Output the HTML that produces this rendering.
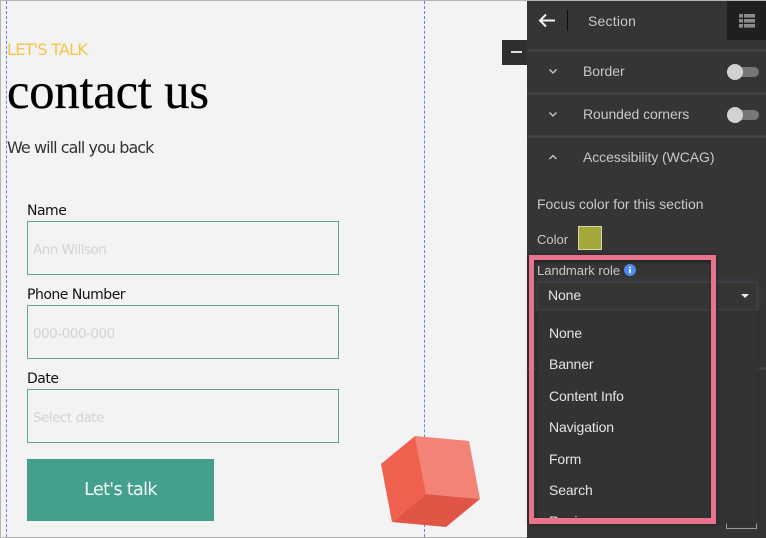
<!DOCTYPE html>
<html><head><meta charset="utf-8">
<style>
html,body{margin:0;padding:0}
body{width:766px;height:538px;position:relative;overflow:hidden;background:#f3f3f3;font-family:"Liberation Sans",sans-serif}
.a{position:absolute;white-space:nowrap}
.os{font-family:"DejaVu Sans",sans-serif}
.lab{left:27px;font-size:14px;color:#111;line-height:18px;letter-spacing:-.5px}
.inp{left:27px;width:310px;height:52px;border:1px solid #5fa98f}
.ph{left:33px;font-size:13.5px;color:#d3d3d3;line-height:18px;letter-spacing:-.5px}
.p{color:#c8c8c8;font-size:14px;letter-spacing:-.08px;line-height:16px}
.sep{left:527px;width:239px;height:3px;background:#414141}
.opt{left:549px;font-size:14px;color:#e4e4e4;line-height:16px;letter-spacing:-.12px}
.tt{width:32px;height:10px;border-radius:5px;background:#777;left:727px}
.tk{width:16px;height:16px;border-radius:50%;background:#d2d2d2;left:727px}
</style></head><body>
<div class="a" style="left:0;top:0;width:766px;height:1px;background:#b5b5b5"></div>
<div class="a" style="left:0;top:0;width:1px;height:538px;background:#b5b5b5"></div>
<div class="a" style="left:0;top:537px;width:766px;height:1px;background:#b5b5b5"></div>
<div class="a" style="left:6px;top:1px;height:536px;border-left:1px dashed #5f85cf"></div>
<div class="a" style="left:424px;top:1px;height:536px;border-left:1px dashed #5f85cf"></div>

<div class="a os" style="left:7px;top:41px;font-size:16px;line-height:18px;color:#f6c445;letter-spacing:-.72px">LET'S TALK</div>
<div class="a" style="left:7px;top:64px;font-family:'Liberation Serif',serif;font-size:50.5px;line-height:54px;color:#000;letter-spacing:-.15px;-webkit-text-stroke:.3px #000">contact us</div>
<div class="a os" style="left:7px;top:138px;font-size:16px;line-height:20px;color:#333;letter-spacing:-.95px">We will call you back</div>

<div class="a os lab" style="top:202px">Name</div>
<div class="a inp" style="top:221px"></div>
<div class="a os ph" style="top:241px">Ann Willson</div>
<div class="a os lab" style="top:286px">Phone Number</div>
<div class="a inp" style="top:305px"></div>
<div class="a os ph" style="top:325px">000-000-000</div>
<div class="a os lab" style="top:370px">Date</div>
<div class="a inp" style="top:389px"></div>
<div class="a os ph" style="top:409px">Select date</div>
<div class="a os" style="left:27px;top:459px;width:187px;height:62px;background:#449f8e;color:#f2fbf8;font-size:17.5px;line-height:62px;text-align:center;letter-spacing:-.65px">Let's talk</div>

<svg class="a" style="left:375px;top:430px" width="110" height="100" viewBox="375 430 110 100">
<polygon points="415,436 469,441 480,499 426,494" fill="#f38376"/>
<polygon points="415,436 381,464 392,522 426,494" fill="#f0604f"/>
<polygon points="426,494 480,499 446,527 392,522" fill="#e05545"/>
</svg>

<div class="a" style="left:527px;top:0;width:239px;height:538px;background:#353535"></div>
<div class="a" style="left:527px;top:0;width:239px;height:1px;background:#b5b5b5"></div>
<div class="a" style="left:502px;top:40px;width:25px;height:25px;background:#2f2f2f"></div>
<div class="a" style="left:511px;top:51px;width:11px;height:2px;background:#ddd"></div>

<svg class="a" style="left:538px;top:13px" width="18" height="15" viewBox="0 0 18 15"><path d="M17 7.5H2M8 1.5L2 7.5L8 13.5" fill="none" stroke="#f2f2f2" stroke-width="2"/></svg>
<div class="a" style="left:567px;top:10px;width:1px;height:21px;background:#0e0e0e"></div>
<div class="a p" style="left:588px;top:13px;letter-spacing:.2px">Section</div>
<div class="a" style="left:727px;top:1px;width:39px;height:39px;background:#1f1f1f"></div>
<svg class="a" style="left:739px;top:14px" width="16" height="14" viewBox="0 0 16 14"><g fill="#8a8a8a"><rect x="0" y="0" width="4" height="3.6"/><rect x="5" y="0" width="11" height="3.6"/><rect x="0" y="5" width="4" height="3.6"/><rect x="5" y="5" width="11" height="3.6"/><rect x="0" y="10" width="4" height="3.6"/><rect x="5" y="10" width="11" height="3.6"/></g></svg>

<div class="a sep" style="top:49px"></div>
<div class="a sep" style="top:92px"></div>
<div class="a sep" style="top:135px"></div>

<svg class="a" style="left:548px;top:68px" width="10" height="7" viewBox="0 0 10 7"><path d="M1.5 1.5L5 5L8.5 1.5" fill="none" stroke="#ccc" stroke-width="1.3"/></svg>
<svg class="a" style="left:548px;top:111px" width="10" height="7" viewBox="0 0 10 7"><path d="M1.5 1.5L5 5L8.5 1.5" fill="none" stroke="#ccc" stroke-width="1.3"/></svg>
<svg class="a" style="left:548px;top:154px" width="10" height="7" viewBox="0 0 10 7"><path d="M1.5 5L5 1.5L8.5 5" fill="none" stroke="#ccc" stroke-width="1.3"/></svg>

<div class="a p" style="left:583px;top:63px">Border</div>
<div class="a p" style="left:583px;top:106px">Rounded corners</div>
<div class="a p" style="left:583px;top:149px">Accessibility (WCAG)</div>
<div class="a tt" style="top:67px"></div><div class="a tk" style="top:64px"></div>
<div class="a tt" style="top:110px"></div><div class="a tk" style="top:107px"></div>

<div class="a p" style="left:537px;top:196px;letter-spacing:0">Focus color for this section</div>
<div class="a p" style="left:537px;top:232px;font-size:13px;letter-spacing:0">Color</div>
<div class="a" style="left:578px;top:226px;width:22px;height:22px;background:#a3a838;border:1px solid #d5d8a5"></div>

<div class="a p" style="left:537px;top:263px;font-size:13px;letter-spacing:0">Landmark role</div>
<svg class="a" style="left:624px;top:264px" width="12" height="12" viewBox="0 0 12 12"><circle cx="6" cy="6" r="6" fill="#4d8bf0"/><rect x="5.2" y="5" width="1.6" height="4.2" fill="#fff"/><rect x="5.2" y="2.6" width="1.6" height="1.6" fill="#fff"/></svg>
<div class="a" style="left:537px;top:282px;width:218px;height:26px;border:1px solid #414141;box-shadow:0 0 8px rgba(90,110,170,.3)"></div>
<div class="a" style="left:548px;top:287px;font-size:14px;line-height:16px;color:#e4e4e4;letter-spacing:-.12px">None</div>
<div class="a" style="left:741px;top:294px;width:0;height:0;border-left:4px solid transparent;border-right:4px solid transparent;border-top:4px solid #eee"></div>

<div class="a" style="left:527px;top:367px;width:239px;height:3px;background:#414141"></div>
<div class="a" style="left:726px;top:510px;width:29px;height:18px;border:1px solid #999;border-top:0"></div>
<div class="a" style="left:537px;top:312px;width:221px;height:211px;background:#333;box-shadow:0 0 2px #222;overflow:hidden"></div>
<div class="a opt" style="top:325px">None</div>
<div class="a opt" style="top:356px">Banner</div>
<div class="a opt" style="top:388px">Content Info</div>
<div class="a opt" style="top:419px">Navigation</div>
<div class="a opt" style="top:451px">Form</div>
<div class="a opt" style="top:482px">Search</div>
<div class="a" style="left:537px;top:505px;width:173px;height:13px;overflow:hidden"><div class="a opt" style="left:12px;top:8px">Region</div></div>

<div class="a" style="left:529px;top:255px;width:177px;height:258px;border:solid #e9738c;border-width:5px 5px 6px 5px;box-shadow:inset 0 2px 3px rgba(0,0,0,.35),0 0 4px rgba(0,0,0,.4)"></div>
</body></html>
